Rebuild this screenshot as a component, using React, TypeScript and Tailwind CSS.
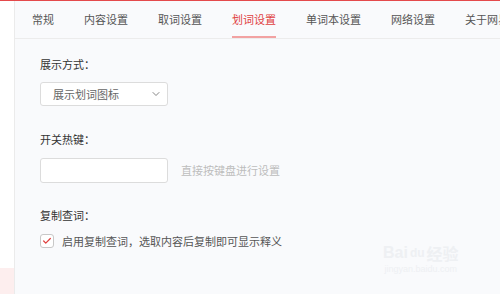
import { ChevronDown, Check } from "lucide-react";

const tabs = ["常规", "内容设置", "取词设置", "划词设置", "单词本设置", "网络设置", "关于网易有道词典"];

const App = () => {
  const active = "划词设置";

  return (
    <div
      className="relative w-[500px] h-[294px] overflow-hidden flex bg-white text-[11px]"
      style={{ fontFamily: '"Noto Sans CJK SC", "Noto Sans", sans-serif' }}
    >
      <div className="absolute top-0 left-0 right-0 h-[1px] bg-[#e4494b]" />

      {/* left strip */}
      <div className="w-[14px] shrink-0 flex flex-col">
        <div className="flex-1 bg-white" />
        <div className="h-[26px] bg-[#fdeeee]" />
      </div>

      {/* main panel */}
      <div className="flex-1 min-w-0 flex flex-col bg-[#f9fafc] border-l border-[#ebebeb] pt-[1px]">
        {/* tabs */}
        <div className="flex h-[38px] border-b border-[#ececec] pl-[2px] whitespace-nowrap overflow-hidden">
          {tabs.map((t) => (
            <div key={t} className="px-[15px] shrink-0 flex flex-col">
              <div
                className={
                  "flex-1 flex items-center pt-[1px] " +
                  (t === active ? "text-[#e0413f]" : "text-[#555]")
                }
              >
                {t}
              </div>
              <div className={"h-[2px] " + (t === active ? "bg-[#f2a2a2]" : "")} />
            </div>
          ))}
        </div>

        {/* content */}
        <div className="flex flex-col pl-[25px]">
          <div className="mt-[17px] h-[16px] flex items-center text-[#333]">展示方式：</div>
          <div className="mt-[10px] w-[128px] h-[24px] bg-white border border-[#dcdcdc] rounded-[3px] flex items-center justify-between pl-[12px] pr-[5px] text-[#666]">
            <span>展示划词图标</span>
            <ChevronDown size={12} strokeWidth={1.6} className="text-[#666]" />
          </div>

          <div className="mt-[25px] h-[16px] flex items-center text-[#333]">开关热键：</div>
          <div className="mt-[11px] flex items-center">
            <div className="w-[128px] h-[25px] bg-white border border-[#dcdcdc] rounded-[3px]" />
            <span className="ml-[13px] text-[#bdbdbd]">直接按键盘进行设置</span>
          </div>

          <div className="mt-[24px] h-[16px] flex items-center text-[#333]">复制查词：</div>
          <div className="mt-[10px] h-[16px] flex items-center">
            <div className="w-[14px] h-[14px] bg-white border border-[#c8c8c8] rounded-[3px] flex items-center justify-center">
              <Check size={10} strokeWidth={3} className="text-[#e0413f]" />
            </div>
            <span className="ml-[8px] text-[#555]">启用复制查词，选取内容后复制即可显示释义</span>
          </div>
        </div>
      </div>

      {/* watermark */}
      <div className="absolute left-[383px] top-[245px] flex flex-col items-center text-[#eef0f3] pointer-events-none">
        <div className="flex items-center text-[16px] font-bold leading-none" style={{ fontFamily: '"Liberation Sans", sans-serif' }}>
          <span>Bai</span>
          <span className="text-[12px] ml-[2px]">du</span>
          <span className="ml-[2px]" style={{ fontFamily: '"Noto Sans CJK SC", sans-serif' }}>经验</span>
        </div>
        <div className="text-[9px] mt-[4px] leading-none" style={{ fontFamily: '"Liberation Sans", sans-serif' }}>
          jingyan.baidu.com
        </div>
      </div>
    </div>
  );
};

export default App;
